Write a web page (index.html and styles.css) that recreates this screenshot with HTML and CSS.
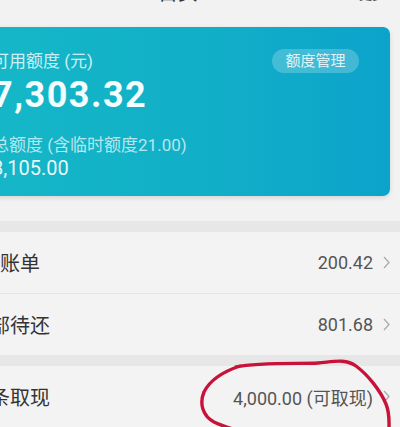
FILE: index.html
```html
<!DOCTYPE html>
<html>
<head>
    <meta name="viewport" content="width=device-width, initial-scale=1.0">
    <link rel="stylesheet" href="styles.css">
</head>
<body>
    <div class="screen">
        <div class="topbar">
            <span class="title">首页</span>
            <span class="topbar-right">更多</span>
        </div>

        <div class="card-wrap">
            <div class="card">
                <div class="card-row">
                    <span class="card-label">可用额度 (元)</span>
                    <span class="quota-btn">额度管理</span>
                </div>
                <div class="card-amount">7,303.32</div>
                <div class="card-sub">总额度 (含临时额度21.00)</div>
                <div class="card-total">8,105.00</div>
            </div>
        </div>

        <div class="band"></div>
        <div class="list">
            <div class="row">
                <span class="row-label">账单</span>
                <span class="row-value">200.42</span>
                <svg class="chev" width="7" height="13" viewBox="0 0 7 13"><polyline points="1,1 6,6.5 1,12" fill="none" stroke="#ababab" stroke-width="1.3"/></svg>
            </div>
            <div class="row">
                <span class="row-label cut">全部待还</span>
                <span class="row-value">801.68</span>
                <svg class="chev" width="7" height="13" viewBox="0 0 7 13"><polyline points="1,1 6,6.5 1,12" fill="none" stroke="#ababab" stroke-width="1.3"/></svg>
            </div>
        </div>
        <div class="band"></div>
        <div class="list">
            <div class="row">
                <span class="row-label cut">借条取现</span>
                <span class="row-value">4,000.00 (可取现)</span>
                <svg class="chev" width="7" height="13" viewBox="0 0 7 13"><polyline points="1,1 6,6.5 1,12" fill="none" stroke="#ababab" stroke-width="1.3"/></svg>
            </div>
        </div>

        <!-- hand drawn mark over the cash row -->
        <svg class="scribble" width="400" height="427" viewBox="0 0 400 427">
            <path d="M236,367 C260,362 300,364 318,363 C332,362 345,358 356,366 C368,375 380,390 386,404 C390,414 389,422 389,430 M240,366 C225,371 210,380 204,392 C199,404 203,416 214,422 C222,426 230,428 236,430" fill="none" stroke="#c8123a" stroke-width="3.4" stroke-linecap="round"/>
        </svg>
    </div>
</body>
</html>
```

FILE: styles.css
```css
* {
    margin: 0;
    padding: 0;
    box-sizing: border-box;
}

body {
    width: 400px;
    height: 427px;
    overflow: hidden;
    background: #f2f2f2;
    font-family: Roboto, "Noto Sans CJK SC", sans-serif;
}

.screen {
    position: relative;
    height: 427px;
    overflow: hidden;
    background: #f2f2f2;
}

.topbar {
    height: 27px;
    display: flex;
    align-items: flex-start;
}

.title {
    margin-left: 158px;
    margin-top: -17px;
    font-size: 20px;
    line-height: 20px;
    color: #333;
}

.topbar-right {
    margin-left: auto;
    margin-right: 15px;
    margin-top: -12px;
    font-size: 13px;
    line-height: 14px;
    color: #555;
}

.card-wrap {
    padding: 0 10px 25px 0;
}

.card {
    margin-left: -30px;
    height: 169px;
    padding: 23px 31px 0 22px;
    border-radius: 0 7px 7px 0;
    background: linear-gradient(90deg, #15b8c7 0%, #11aec8 60%, #0ca3cb 100%);
    box-shadow: 0 2px 5px rgba(0, 0, 0, 0.12);
    color: #fff;
}

.card-row {
    display: flex;
    justify-content: space-between;
    align-items: center;
    height: 22px;
}

.card-label {
    font-size: 17px;
    line-height: 20px;
    color: rgba(255, 255, 255, 0.8);
}

.quota-btn {
    width: 87px;
    height: 24px;
    border-radius: 12px;
    background: rgba(255, 255, 255, 0.22);
    color: rgba(255, 255, 255, 0.85);
    font-size: 15px;
    line-height: 24px;
    text-align: center;
}

.card-amount {
    margin-top: 2px;
    font-size: 36px;
    font-weight: 700;
    letter-spacing: 1.5px;
    line-height: 42px;
    color: #f4fcfd;
}

.card-sub {
    margin-top: 19px;
    font-size: 17px;
    line-height: 20px;
    color: rgba(255, 255, 255, 0.7);
}

.card-total {
    margin-top: 1px;
    font-size: 20px;
    line-height: 24px;
    color: rgba(255, 255, 255, 0.92);
}

.band {
    height: 11px;
    background: #e7e7e7;
}

.list {
    background: #f3f3f3;
}

.row {
    height: 62px;
    display: flex;
    align-items: center;
    padding-right: 10px;
    border-bottom: 1px solid #e6e6e6;
}

.row:last-child {
    border-bottom: none;
    height: 61px;
}

.row-label {
    font-size: 20px;
    color: #333;
}

.row-label.cut {
    margin-left: -30px;
}

.row-value {
    margin-left: auto;
    font-size: 18px;
    color: #555;
}

.chev {
    margin-left: 10px;
}

.scribble {
    position: absolute;
    left: 0;
    top: 0;
}
```
